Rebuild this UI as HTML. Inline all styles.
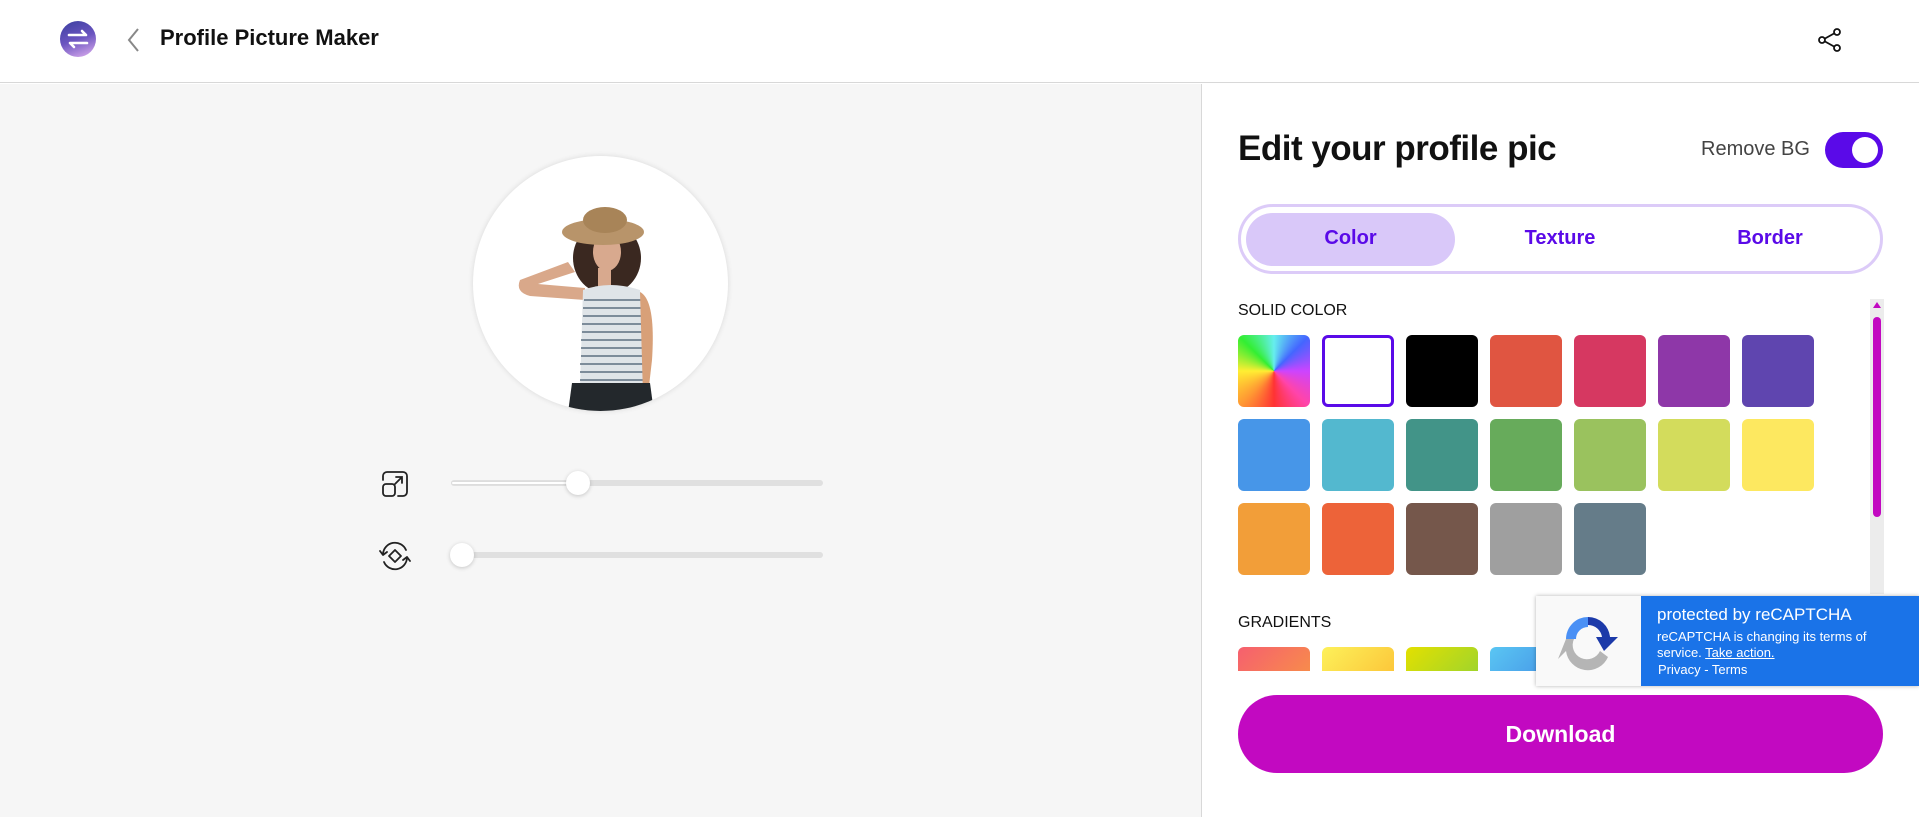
<!DOCTYPE html>
<html><head><meta charset="utf-8"><style>
*{margin:0;padding:0;box-sizing:border-box}
body{width:1919px;height:817px;overflow:hidden;background:#fff;font-family:"Liberation Sans",sans-serif;position:relative}
.abs{position:absolute}
.sw{position:absolute;width:72px;height:72px;border-radius:6px}
</style></head><body>
<div class="abs" style="left:0;top:0;width:1919px;height:83px;border-bottom:1px solid #d8d8d8;background:#fff"></div>
<div class="abs" style="left:60px;top:21px;width:36px;height:36px;border-radius:50%;background:linear-gradient(160deg,#3b3fa0 0%,#6b55c0 50%,#e0b0f0 100%)"></div>
<svg class="abs" style="left:60px;top:21px" width="36" height="36" viewBox="0 0 36 36"><path d="M9 14h17l-4-4M27 22H10l4 4" stroke="#fff" stroke-width="2.6" fill="none" stroke-linecap="round" stroke-linejoin="round"/></svg>
<svg class="abs" style="left:124px;top:27px" width="20" height="26" viewBox="0 0 20 26"><path d="M14 2L5 13l9 11" stroke="#888" stroke-width="2" fill="none"/></svg>
<div class="abs" style="left:160px;top:25px;font-size:22px;font-weight:bold;color:#111">Profile Picture Maker</div>
<svg class="abs" style="left:1817px;top:27px" width="26" height="26" viewBox="0 0 26 26" fill="none" stroke="#111" stroke-width="1.8"><circle cx="20" cy="5" r="3"/><circle cx="5" cy="13" r="3"/><circle cx="20" cy="21" r="3"/><path d="M8 11.5l9-5M8 14.5l9 5"/></svg>
<div class="abs" style="left:0;top:84px;width:1201px;height:733px;background:#f6f6f6"></div>
<div class="abs" style="left:1201px;top:84px;width:1px;height:733px;background:#d8d8d8"></div>
<div class="abs" style="left:473px;top:156px;width:255px;height:255px;border-radius:50%;background:#fff;box-shadow:0 0 6px rgba(0,0,0,.12);overflow:hidden">
<svg width="255" height="255" viewBox="473 156 255 255">
<path d="M585 300 L530 296 Q515 292 520 280 L568 262 L575 272 L538 284 L585 288 Z" fill="#d9a88a"/>
<ellipse cx="607" cy="258" rx="34" ry="36" fill="#3a2820"/>
<ellipse cx="607" cy="252" rx="14" ry="19" fill="#d8a98e"/>
<ellipse cx="603" cy="232" rx="41" ry="13" fill="#b8946a"/>
<ellipse cx="605" cy="220" rx="22" ry="13" fill="#a88458"/>
<rect x="598" y="268" width="13" height="22" fill="#d8a98e"/>
<path d="M583 290 Q610 280 640 290 L650 388 L580 388 Z" fill="#dfe4e8"/>
<g stroke="#5d6f80" stroke-width="1.5"><path d="M584 300h62M583 308h64M583 316h64M582 324h66M582 332h66M581 340h67M581 348h67M581 356h67M580 364h68M580 372h68M580 380h68"/></g>
<path d="M640 292 Q656 300 652 360 L648 395 L643 395 Z" fill="#d8a078"/>
<path d="M572 383 L650 383 L655 420 L567 420 Z" fill="#23282c"/>
</svg></div>
<svg class="abs" style="left:380px;top:469px" width="30" height="30" viewBox="0 0 30 30" fill="none" stroke="#222" stroke-width="1.8" stroke-linecap="round"><path d="M3 11V7a4 4 0 0 1 4-4h16a4 4 0 0 1 4 4v16a4 4 0 0 1-4 4h-5"/><rect x="3" y="15" width="12" height="12" rx="3"/><path d="M15 15l7-7M16 8h6v6"/></svg>
<div class="abs" style="left:451px;top:480px;width:372px;height:6px;border-radius:3px;background:#e0e0e0"></div>
<div class="abs" style="left:451px;top:481px;width:127px;height:4px;border-radius:2px;background:#fff;border:1px solid #ddd"></div>
<div class="abs" style="left:566px;top:471px;width:24px;height:24px;border-radius:50%;background:#fff;box-shadow:0 1px 4px rgba(0,0,0,.2)"></div>
<svg class="abs" style="left:377px;top:540px" width="36" height="32" viewBox="0 0 36 32" fill="none" stroke="#222" stroke-width="1.8" stroke-linecap="round" stroke-linejoin="round"><path d="M6 14a12 12 0 0 1 23-4M30 18a12 12 0 0 1-23 4"/><path d="M3 11l3 4 4-3M33 21l-3-4-4 3"/><path d="M18 10l6 6-6 6-6-6z"/></svg>
<div class="abs" style="left:451px;top:552px;width:372px;height:6px;border-radius:3px;background:#e0e0e0"></div>
<div class="abs" style="left:450px;top:543px;width:24px;height:24px;border-radius:50%;background:#fff;box-shadow:0 1px 4px rgba(0,0,0,.2)"></div>
<div class="abs" style="left:1238px;top:129px;font-size:35px;font-weight:bold;color:#111;letter-spacing:-0.5px">Edit your profile pic</div>
<div class="abs" style="left:1701px;top:138px;font-size:20px;color:#444">Remove BG</div>
<div class="abs" style="left:1825px;top:132px;width:58px;height:36px;border-radius:18px;background:#5a0ae8"></div>
<div class="abs" style="left:1852px;top:137px;width:26px;height:26px;border-radius:50%;background:#fff"></div>
<div class="abs" style="left:1238px;top:204px;width:645px;height:70px;border:3px solid #dccbf8;border-radius:35px"></div>
<div class="abs" style="left:1246px;top:213px;width:209px;height:53px;border-radius:27px;background:#d9c8f9"></div>
<div class="abs" style="left:1246px;top:227px;width:209px;text-align:center;font-size:20px;color:#5a0ae8;font-weight:600">Color</div>
<div class="abs" style="left:1460px;top:227px;width:200px;text-align:center;font-size:20px;color:#5a0ae8;font-weight:600">Texture</div>
<div class="abs" style="left:1670px;top:227px;width:200px;text-align:center;font-size:20px;color:#5a0ae8;font-weight:600">Border</div>
<div class="abs" style="left:1238px;top:302px;font-size:16px;color:#111">SOLID COLOR</div>
<div class="sw" style="left:1238px;top:335px;background:conic-gradient(from 0deg at 50% 50%,#6ee,#46f,#c4f,#f4a,#f33,#f93,#fe3,#3e3,#6ee)"></div>
<div class="sw" style="left:1322px;top:335px;border:3px solid #5a0ae8;background:#fff"></div>
<div class="sw" style="left:1406px;top:335px;background:#000"></div>
<div class="sw" style="left:1490px;top:335px;background:#e05541"></div>
<div class="sw" style="left:1574px;top:335px;background:#d63861"></div>
<div class="sw" style="left:1658px;top:335px;background:#8e37a8"></div>
<div class="sw" style="left:1742px;top:335px;background:#5f45af"></div>
<div class="sw" style="left:1238px;top:419px;background:#4796e8"></div>
<div class="sw" style="left:1322px;top:419px;background:#53b8cf"></div>
<div class="sw" style="left:1406px;top:419px;background:#429488"></div>
<div class="sw" style="left:1490px;top:419px;background:#67ab5b"></div>
<div class="sw" style="left:1574px;top:419px;background:#9ac25e"></div>
<div class="sw" style="left:1658px;top:419px;background:#d3dc5c"></div>
<div class="sw" style="left:1742px;top:419px;background:#fde860"></div>
<div class="sw" style="left:1238px;top:503px;background:#f29e39"></div>
<div class="sw" style="left:1322px;top:503px;background:#ed6339"></div>
<div class="sw" style="left:1406px;top:503px;background:#75574b"></div>
<div class="sw" style="left:1490px;top:503px;background:#9f9f9f"></div>
<div class="sw" style="left:1574px;top:503px;background:#657c89"></div>
<div class="abs" style="left:1238px;top:614px;font-size:16px;color:#111">GRADIENTS</div>
<div class="abs" style="left:1238px;top:647px;width:660px;height:24px;overflow:hidden">
<div class="sw" style="left:0;top:0;background:linear-gradient(135deg,#f65f6f,#f8a13a)"></div>
<div class="sw" style="left:84px;top:0;background:linear-gradient(135deg,#fdf15a,#fbb22a)"></div>
<div class="sw" style="left:168px;top:0;background:linear-gradient(135deg,#e3e000,#80cf40)"></div>
<div class="sw" style="left:252px;top:0;background:linear-gradient(135deg,#5ac6f3,#3a7be0)"></div>
</div>
<div class="abs" style="left:1870px;top:299px;width:14px;height:295px;background:#ececec"></div>
<div class="abs" style="left:1873px;top:302px;width:0;height:0;border-left:4px solid transparent;border-right:4px solid transparent;border-bottom:6px solid #c209c1"></div>
<div class="abs" style="left:1873px;top:317px;width:8px;height:200px;border-radius:4px;background:#c209c1"></div>
<div class="abs" style="left:1536px;top:596px;width:383px;height:90px;background:#1a73e8;box-shadow:0 0 4px rgba(0,0,0,.3)"></div>
<div class="abs" style="left:1536px;top:596px;width:105px;height:90px;background:#f9f9f9"></div>
<svg class="abs" style="left:1556px;top:611px" width="64" height="60" viewBox="0 0 64 60"><path d="M32 6 A22 22 0 0 1 54 26 L62 26 L48 40 L40 26 L46 26 A14 14 0 0 0 32 14 Z" fill="#1c3aa9"/><path d="M32 6 A22 22 0 0 0 10 28 L20 28 A12 12 0 0 1 32 16 Z" fill="#4a90f5"/><path d="M10 28 L18 28 A14 14 0 0 0 44 40 L52 46 A22 22 0 0 1 10 40 L2 48 Z" fill="#b5b5b5"/></svg>
<div class="abs" style="left:1657px;top:605px;font-size:17px;color:#fff">protected by reCAPTCHA</div>
<div class="abs" style="left:1657px;top:629px;font-size:13px;color:#fff;line-height:16px">reCAPTCHA is changing its terms of<br>service. <u>Take action.</u></div>
<div class="abs" style="left:1658px;top:662px;font-size:13px;color:#fff">Privacy - Terms</div>
<div class="abs" style="left:1238px;top:695px;width:645px;height:78px;border-radius:39px;background:#c209c1;color:#fff;font-size:23px;font-weight:bold;text-align:center;line-height:78px">Download</div>
</body></html>
